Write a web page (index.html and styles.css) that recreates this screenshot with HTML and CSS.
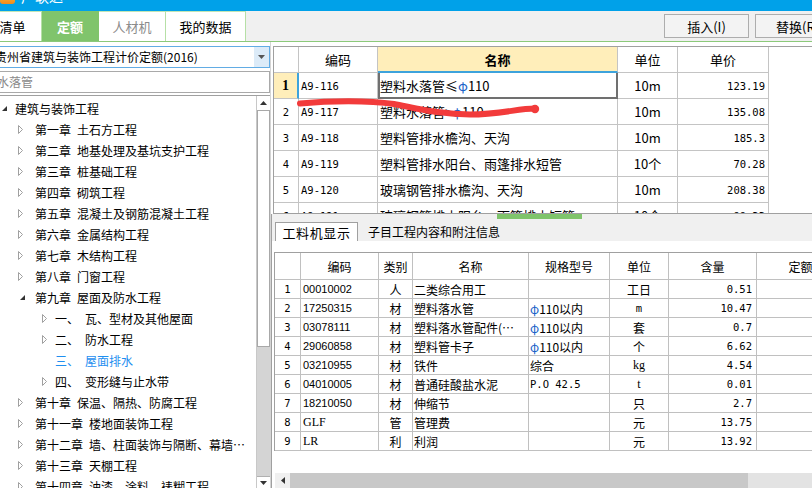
FILE: index.html
```html
<!DOCTYPE html>
<html lang="zh-CN">
<head>
<meta charset="utf-8">
<title>定额</title>
<link rel="stylesheet" href="styles.css">
</head>
<body>
<div class="app">
  <div class="titlebar"><span class="logo"></span><span class="title">广联达</span></div>
  <div class="tabbar">
    <div class="tab t1">清单</div>
    <div class="tab t2 on">定额</div>
    <div class="tab t3">人材机</div>
    <div class="tab t4">我的数据</div>
    <div class="btn b1">插入(I)</div>
    <div class="btn b2">替换(R)</div>
  </div>
  <div class="main">
    <div class="left">
      <div class="combo">
        <span class="combo-text">贵州省建筑与装饰工程计价定额(2016)</span>
        <span class="combo-arrow"><svg width="7" height="4" viewBox="0 0 7 4"><path d="M0 0H7L3.5 4Z" fill="#555"/></svg></span>
      </div>
      <div class="search">水落管</div>
      <div class="tree">
        <div class="tree-body">
          <div class="row l0"><span class="ic"><svg width="5" height="5" viewBox="0 0 5 5"><path d="M5 0V5H0Z" fill="#333"/></svg></span><span>建筑与装饰工程</span></div>
          <div class="row l1"><span class="ic"><svg width="6" height="9" viewBox="0 0 6 9"><path d="M0.5 0.5L4.5 4.5L0.5 8.5Z" fill="#fff" stroke="#a0a0a0"/></svg></span><span class="k">第一章</span><span>土石方工程</span></div>
          <div class="row l1"><span class="ic"><svg width="6" height="9" viewBox="0 0 6 9"><path d="M0.5 0.5L4.5 4.5L0.5 8.5Z" fill="#fff" stroke="#a0a0a0"/></svg></span><span class="k">第二章</span><span>地基处理及基坑支护工程</span></div>
          <div class="row l1"><span class="ic"><svg width="6" height="9" viewBox="0 0 6 9"><path d="M0.5 0.5L4.5 4.5L0.5 8.5Z" fill="#fff" stroke="#a0a0a0"/></svg></span><span class="k">第三章</span><span>桩基础工程</span></div>
          <div class="row l1"><span class="ic"><svg width="6" height="9" viewBox="0 0 6 9"><path d="M0.5 0.5L4.5 4.5L0.5 8.5Z" fill="#fff" stroke="#a0a0a0"/></svg></span><span class="k">第四章</span><span>砌筑工程</span></div>
          <div class="row l1"><span class="ic"><svg width="6" height="9" viewBox="0 0 6 9"><path d="M0.5 0.5L4.5 4.5L0.5 8.5Z" fill="#fff" stroke="#a0a0a0"/></svg></span><span class="k">第五章</span><span>混凝土及钢筋混凝土工程</span></div>
          <div class="row l1"><span class="ic"><svg width="6" height="9" viewBox="0 0 6 9"><path d="M0.5 0.5L4.5 4.5L0.5 8.5Z" fill="#fff" stroke="#a0a0a0"/></svg></span><span class="k">第六章</span><span>金属结构工程</span></div>
          <div class="row l1"><span class="ic"><svg width="6" height="9" viewBox="0 0 6 9"><path d="M0.5 0.5L4.5 4.5L0.5 8.5Z" fill="#fff" stroke="#a0a0a0"/></svg></span><span class="k">第七章</span><span>木结构工程</span></div>
          <div class="row l1"><span class="ic"><svg width="6" height="9" viewBox="0 0 6 9"><path d="M0.5 0.5L4.5 4.5L0.5 8.5Z" fill="#fff" stroke="#a0a0a0"/></svg></span><span class="k">第八章</span><span>门窗工程</span></div>
          <div class="row l1"><span class="ic open"><svg width="5" height="5" viewBox="0 0 5 5"><path d="M5 0V5H0Z" fill="#333"/></svg></span><span class="k">第九章</span><span>屋面及防水工程</span></div>
          <div class="row l2"><span class="ic"><svg width="6" height="9" viewBox="0 0 6 9"><path d="M0.5 0.5L4.5 4.5L0.5 8.5Z" fill="#fff" stroke="#a0a0a0"/></svg></span><span class="n">一、</span><span>瓦、型材及其他屋面</span></div>
          <div class="row l2"><span class="ic"><svg width="6" height="9" viewBox="0 0 6 9"><path d="M0.5 0.5L4.5 4.5L0.5 8.5Z" fill="#fff" stroke="#a0a0a0"/></svg></span><span class="n">二、</span><span>防水工程</span></div>
          <div class="row l2 sel"><span class="ic"></span><span class="n">三、</span><span>屋面排水</span></div>
          <div class="row l2"><span class="ic"><svg width="6" height="9" viewBox="0 0 6 9"><path d="M0.5 0.5L4.5 4.5L0.5 8.5Z" fill="#fff" stroke="#a0a0a0"/></svg></span><span class="n">四、</span><span>变形缝与止水带</span></div>
          <div class="row l1"><span class="ic"><svg width="6" height="9" viewBox="0 0 6 9"><path d="M0.5 0.5L4.5 4.5L0.5 8.5Z" fill="#fff" stroke="#a0a0a0"/></svg></span><span class="k">第十章</span><span>保温、隔热、防腐工程</span></div>
          <div class="row l1"><span class="ic"><svg width="6" height="9" viewBox="0 0 6 9"><path d="M0.5 0.5L4.5 4.5L0.5 8.5Z" fill="#fff" stroke="#a0a0a0"/></svg></span><span class="k">第十一章</span><span>楼地面装饰工程</span></div>
          <div class="row l1"><span class="ic"><svg width="6" height="9" viewBox="0 0 6 9"><path d="M0.5 0.5L4.5 4.5L0.5 8.5Z" fill="#fff" stroke="#a0a0a0"/></svg></span><span class="k">第十二章</span><span>墙、柱面装饰与隔断、幕墙…</span></div>
          <div class="row l1"><span class="ic"><svg width="6" height="9" viewBox="0 0 6 9"><path d="M0.5 0.5L4.5 4.5L0.5 8.5Z" fill="#fff" stroke="#a0a0a0"/></svg></span><span class="k">第十三章</span><span>天棚工程</span></div>
          <div class="row l1"><span class="ic"><svg width="6" height="9" viewBox="0 0 6 9"><path d="M0.5 0.5L4.5 4.5L0.5 8.5Z" fill="#fff" stroke="#a0a0a0"/></svg></span><span class="k">第十四章</span><span>油漆、涂料、裱糊工程</span></div>
        </div>
        <div class="vscroll">
          <div class="vbtn"><svg width="7" height="4" viewBox="0 0 7 4"><path d="M0 4H7L3.5 0Z" fill="#333"/></svg></div>
          <div class="vthumb"></div>
          <div class="vtrack"></div>
          <div class="vbtn down"><svg width="7" height="4" viewBox="0 0 7 4"><path d="M0 0H7L3.5 4Z" fill="#333"/></svg></div>
        </div>
      </div>
    </div>

    <div class="right">
      <div class="top">
        <div class="tbox">
          <div class="tr th">
            <div></div><div class="cc">编码</div><div class="cc hname">名称</div><div class="cc">单位</div><div class="cc">单价</div>
          </div>
          <div class="tr">
            <div class="cc num cur">1</div><div class="mono code cl">A9-116</div><div class="name csel">塑料水落管≤<span class="phi">φ</span>110</div><div class="cc">10m</div><div class="mono pr">123.19</div>
          </div>
          <div class="tr">
            <div class="cc mono">2</div><div class="mono code">A9-117</div><div class="name">塑料水落管&gt;<span class="phi">φ</span>110</div><div class="cc">10m</div><div class="mono pr">135.08</div>
          </div>
          <div class="tr">
            <div class="cc mono">3</div><div class="mono code">A9-118</div><div class="name">塑料管排水檐沟、天沟</div><div class="cc">10m</div><div class="mono pr">185.3</div>
          </div>
          <div class="tr">
            <div class="cc mono">4</div><div class="mono code">A9-119</div><div class="name">塑料管排水阳台、雨篷排水短管</div><div class="cc">10个</div><div class="mono pr">70.28</div>
          </div>
          <div class="tr">
            <div class="cc mono">5</div><div class="mono code">A9-120</div><div class="name">玻璃钢管排水檐沟、天沟</div><div class="cc">10m</div><div class="mono pr">208.38</div>
          </div>
          <div class="tr">
            <div class="cc mono">6</div><div class="mono code">A9-121</div><div class="name">玻璃钢管排水阳台、雨篷排水短管</div><div class="cc">10个</div><div class="mono pr">99.33</div>
          </div>
        </div>
      </div>

      <div class="bottom">
        <div class="split"><span class="grip"></span></div>
        <div class="tabs2">
          <div class="tab2 on2">工料机显示</div>
          <div class="tab2 off2">子目工程内容和附注信息</div>
        </div>
        <div class="gap"></div>
        <div class="btable">
          <div class="br bh">
            <div></div><div class="cc">编码</div><div class="cc">类别</div><div class="cc">名称</div><div class="cc">规格型号</div><div class="cc">单位</div><div class="cc">含量</div><div class="cc">定额价</div>
          </div>
          <div class="br"><div class="cc mono">1</div><div class="bcode">00010002</div><div class="cc">人</div><div class="bname">二类综合用工</div><div class="spec"></div><div class="cc">工日</div><div class="mono qty">0.51</div><div></div></div>
          <div class="br"><div class="cc mono">2</div><div class="bcode">17250315</div><div class="cc">材</div><div class="bname">塑料落水管</div><div class="spec"><span class="phi">φ</span>110以内</div><div class="cc mono">m</div><div class="mono qty">10.47</div><div></div></div>
          <div class="br"><div class="cc mono">3</div><div class="bcode">03078111</div><div class="cc">材</div><div class="bname">塑料落水管配件(…</div><div class="spec"><span class="phi">φ</span>110以内</div><div class="cc">套</div><div class="mono qty">0.7</div><div></div></div>
          <div class="br"><div class="cc mono">4</div><div class="bcode">29060858</div><div class="cc">材</div><div class="bname">塑料管卡子</div><div class="spec"><span class="phi">φ</span>110以内</div><div class="cc">个</div><div class="mono qty">6.62</div><div></div></div>
          <div class="br"><div class="cc mono">5</div><div class="bcode">03210955</div><div class="cc">材</div><div class="bname">铁件</div><div class="spec">综合</div><div class="cc serif">kg</div><div class="mono qty">4.54</div><div></div></div>
          <div class="br"><div class="cc mono">6</div><div class="bcode">04010005</div><div class="cc">材</div><div class="bname">普通硅酸盐水泥</div><div class="spec mono">P.O 42.5</div><div class="cc serif">t</div><div class="mono qty">0.01</div><div></div></div>
          <div class="br"><div class="cc mono">7</div><div class="bcode">18210050</div><div class="cc">材</div><div class="bname">伸缩节</div><div class="spec"></div><div class="cc">只</div><div class="mono qty">2.7</div><div></div></div>
          <div class="br"><div class="cc mono">8</div><div class="bcode serif">GLF</div><div class="cc">管</div><div class="bname">管理费</div><div class="spec"></div><div class="cc">元</div><div class="mono qty">13.75</div><div></div></div>
          <div class="br"><div class="cc mono">9</div><div class="bcode serif">LR</div><div class="cc">利</div><div class="bname">利润</div><div class="spec"></div><div class="cc">元</div><div class="mono qty">13.92</div><div></div></div>
        </div>
        <div class="fill"></div>
        <div class="hscroll">
          <div class="hbtn"><svg width="4" height="7" viewBox="0 0 4 7"><path d="M4 0V7L0 3.5Z" fill="#333"/></svg></div>
          <div class="hthumb"></div>
          <div class="htrack"></div>
        </div>
      </div>
    </div>
  </div>
  <svg class="scribble" width="812" height="488" viewBox="0 0 812 488">
    <path d="M300 103.5C330 100.5 368 100 394 104C420 109 442 114.5 470 114.5C500 114.5 518 108.5 535 108.5" fill="none" stroke="#f23b3b" stroke-width="6" stroke-linecap="round"/>
    <circle cx="535" cy="109" r="4.2" fill="#f23b3b"/>
  </svg>
</div>
</body>
</html>
```
FILE: styles.css
```css
* { box-sizing: border-box; margin: 0; padding: 0; }
body {
  margin: 0;
  font-family: "Noto Sans CJK SC", "Noto Sans", sans-serif;
  font-size: 12px;
  color: #000;
  background: #fff;
  overflow: hidden;
}
.app { position: relative; width: 812px; height: 488px; overflow: hidden; background: #fff; }

/* title bar */
.titlebar { height: 11px; background: #00a1e9; display: flex; align-items: flex-end; overflow: hidden; }
.logo { flex: none; width: 15px; height: 14px; margin-bottom: 7px; border-radius: 3px; background: linear-gradient(#f9d04a, #f08a1c); }
.title { color: #fff; font-size: 14px; line-height: 14px; margin-left: 6px; margin-bottom: 8px; }

/* tab bar */
.tabbar { height: 31px; background: #f0f0f0; border-bottom: 1px solid #8cc97a; display: flex; align-items: flex-start; overflow: hidden; }
.tab { flex: none; height: 30px; display: flex; align-items: center; justify-content: center; background: #fff; border-top: 1px solid #c2e6b6; border-right: 1px solid #b6e0a6; font-size: 13px; }
.t1 { width: 58px; margin-left: -16px; }
.t2 { width: 57px; }
.t3 { width: 67px; color: #8c8c8c; }
.t4 { width: 80px; }
.tab.on { background: #80c46c; border-color: #80c46c; color: #fff; font-weight: bold; }
.btn { flex: none; margin-top: 3px; width: 85px; height: 24px; border: 1px solid #adadad; background: #f3f3f3; font-size: 13px; display: flex; align-items: center; justify-content: center; }
.b1 { margin-left: 418px; }
.b2 { margin-left: 6px; justify-content: flex-start; padding-left: 20px; }

/* main */
.main { display: flex; height: 446px; }
.left { flex: none; width: 270px; padding-top: 4px; display: flex; flex-direction: column; }
.combo { height: 22px; margin-left: -8px; border: 1px solid #62ace4; display: flex; align-items: stretch; }
.combo-text { flex: 1; padding-left: 2px; white-space: nowrap; overflow: hidden; line-height: 20px; font-size: 12px; }
.combo-arrow { flex: none; width: 15px; background: #dcebf8; display: flex; align-items: center; justify-content: center; }
.search { margin-top: 3px; height: 22px; margin-left: -8px; border: 1px solid #a9a9a9; padding-left: 4px; color: #8a8a8a; line-height: 20px; font-size: 12px; }
.tree { flex: 1; margin-top: 2px; border-top: 1px solid #a0a0a0; display: flex; min-height: 0; }
.tree-body { flex: 1; padding-top: 2px; overflow: hidden; }
.row { height: 21px; display: flex; align-items: center; white-space: nowrap; font-size: 12px; }
.ic { flex: none; display: flex; align-items: center; }
.l0 { padding-left: 2px; }
.l0 .ic { width: 13px; }
.l1 { padding-left: 18px; }
.l1 .ic { width: 17px; }
.l1 .ic.open { padding-left: 2px; }
.l2 { padding-left: 42px; }
.l2 .ic { width: 13px; }
.k { margin-right: 6px; }
.n { width: 30px; flex: none; }
.sel { color: #1f8ff0; }
.vscroll { flex: none; width: 14px; border-left: 1px solid #c8c8c8; display: flex; flex-direction: column; background: #fff; }
.vbtn { flex: none; height: 14px; display: flex; align-items: center; justify-content: center; background: #fff; }
.vbtn.down { height: 12px; align-items: flex-start; padding-top: 4px; border-top: 1px solid #b0b0b0; }
.vthumb { flex: none; height: 237px; border: 1px solid #a8a8a8; background: #fff; }
.vtrack { flex: 1; background: #d4d4d4; }

/* right */
.right { flex: 1; min-width: 0; border-left: 1px solid #d4d4d4; display: flex; flex-direction: column; }
.top { flex: none; height: 172px; padding-top: 4px; padding-left: 2px; }
.tbox { height: 168px; border: 1px solid #a0a0a0; border-right: none; overflow: hidden; background: #fff; }
.tr { display: grid; grid-template-columns: 25px 79px 240px 60px 91px; height: 26px; }
.tr > div { border-right: 1px solid #c4c4c4; border-bottom: 1px solid #c4c4c4; display: flex; align-items: center; white-space: nowrap; overflow: hidden; font-size: 13px; }
.cc { justify-content: center; }
.th > div { font-size: 13px; }
.hname { background: #ffeeba; font-weight: bold; border-bottom: 2px solid #3ea3dc !important; }
.num.cur { background: #ffeeba; border-right: 2px solid #3ea3dc !important; font-family: "Liberation Serif", serif; font-weight: bold; font-size: 14px !important; }
.mono { font-family: "DejaVu Sans Mono", monospace; font-size: 10.5px !important; }
.code { padding-left: 2px; }
.name { padding-left: 2px; }
.csel { box-shadow: inset 2px 0 #707070, inset -1px 0 #707070, inset 0 -1px #707070; border-right-color: #707070 !important; border-bottom-color: #707070 !important; }
.pr { justify-content: flex-end; padding-right: 3px; }
.phi { color: #1a63c8; }

/* bottom */
.bottom { flex: 1; min-height: 0; display: flex; flex-direction: column; border-left: 1px solid #a0a0a0; }
.split { flex: none; height: 5px; background: #f0f0f0; display: flex; }
.grip { width: 85px; margin-left: 225px; background: #7fc46b; }
.tabs2 { flex: none; height: 22px; background: #f0f0f0; display: flex; align-items: flex-end; padding-left: 3px; }
.tab2 { height: 19px; display: flex; align-items: center; }
.on2 { width: 83px; background: #fff; border: 1px solid #a0a0a0; border-bottom: none; justify-content: center; font-size: 13px; letter-spacing: 0.6px; }
.off2 { padding-left: 10px; font-size: 12px; }
.gap { flex: none; height: 11px; background: #fff; }
.btable { flex: none; margin-left: 2px; border-top: 1px solid #a0a0a0; border-left: 1px solid #a0a0a0; overflow: hidden; }
.br { display: grid; grid-template-columns: 26px 78px 34px 116px 81px 59px 88px 100px; width: 582px; height: 19px; }
.br.bh { height: 27px; }
.br > div { border-right: 1px solid #c0c0c0; border-bottom: 1px solid #c0c0c0; display: flex; align-items: center; white-space: nowrap; overflow: hidden; font-size: 12px; }
.bcode { padding-left: 2px; font-family: "Liberation Sans", sans-serif; font-size: 11px !important; }
.bname { padding-left: 1px; }
.spec { padding-left: 1px; }
.qty { justify-content: flex-end; padding-right: 4px; }
.serif { font-family: "Liberation Serif", serif; font-size: 12px !important; }
.fill { flex: 1; }
.hscroll { flex: none; height: 15px; display: flex; padding-left: 3px; }
.hbtn { width: 15px; display: flex; align-items: center; justify-content: center; background: #f0f0f0; }
.hthumb { width: 458px; background: #c8c8c8; }
.htrack { flex: 1; background: #e3e3e3; }

.scribble { position: absolute; left: 0; top: 0; pointer-events: none; }
```
